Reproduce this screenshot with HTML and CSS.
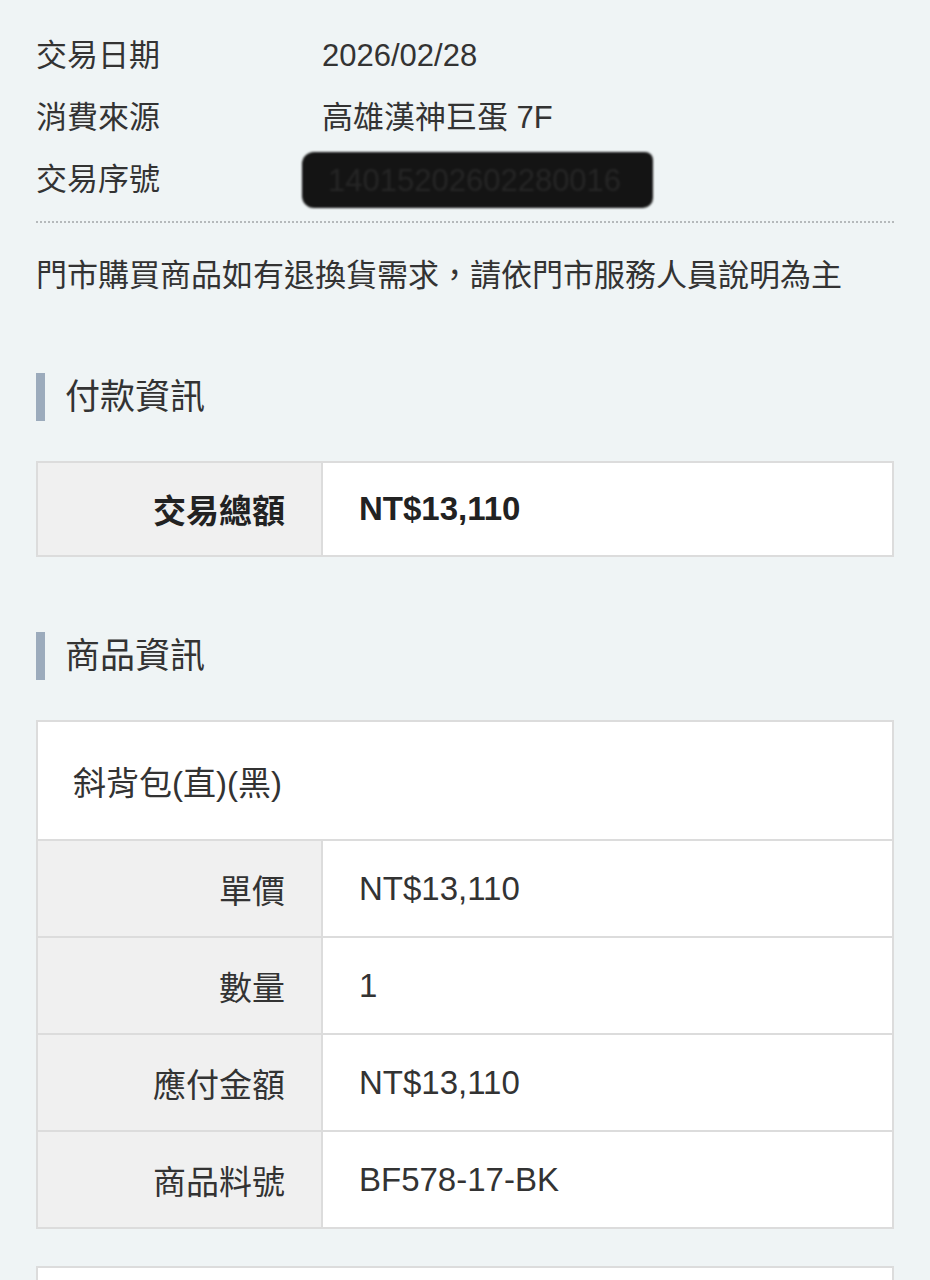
FILE: index.html
```html
<!DOCTYPE html>
<html lang="zh-Hant">
<head>
  <meta charset="UTF-8" />
  <title>交易明細</title>
  <link rel="stylesheet" href="styles.css">
</head>
<body>
  <div class="info">
    <div class="info-row">
      <span class="info-label">交易日期</span>
      <span class="info-value">2026/02/28</span>
    </div>
    <div class="info-row">
      <span class="info-label">消費來源</span>
      <span class="info-value">高雄漢神巨蛋 7F</span>
    </div>
    <div class="info-row">
      <span class="info-label">交易序號</span>
      <span class="info-value"><span class="redacted">14015202602280016</span></span>
    </div>
  </div>

  <p class="notice">門市購買商品如有退換貨需求，請依門市服務人員說明為主</p>

  <h2 class="section-title">付款資訊</h2>
  <div class="detail-table">
    <div class="detail-row">
      <div class="cell label strong">交易總額</div>
      <div class="cell value strong">NT$13,110</div>
    </div>
  </div>

  <h2 class="section-title">商品資訊</h2>
  <div class="detail-table">
    <div class="product-name">斜背包(直)(黑)</div>
    <div class="detail-row">
      <div class="cell label">單價</div>
      <div class="cell value">NT$13,110</div>
    </div>
    <div class="detail-row">
      <div class="cell label">數量</div>
      <div class="cell value">1</div>
    </div>
    <div class="detail-row">
      <div class="cell label">應付金額</div>
      <div class="cell value">NT$13,110</div>
    </div>
    <div class="detail-row">
      <div class="cell label">商品料號</div>
      <div class="cell value">BF578-17-BK</div>
    </div>
  </div>

  <div class="detail-table next-box"></div>
</body>
</html>
```

FILE: styles.css
```css
body {
  font-family: "Liberation Sans", "Noto Sans CJK TC", sans-serif;
  background: #eff4f5;
  color: #333;
  margin: 0;
  padding: 25px 36px 0;
}

.info {
  border-bottom: 2px dotted #b5b9bb;
  padding-bottom: 10px;
}

.info-row {
  display: flex;
  height: 62px;
  line-height: 62px;
  font-size: 31px;
}

.info-label {
  width: 286px;
  flex-shrink: 0;
}

.redacted {
  display: inline-block;
  background: #141414;
  color: #262626;
  line-height: 54px;
  padding: 2px 32px 0 26px;
  margin-left: -20px;
  border-radius: 12px 8px 10px 12px;
  filter: blur(1px);
  vertical-align: middle;
  margin-top: -4px;
}

.notice {
  font-size: 31px;
  line-height: 44px;
  margin: 31px 0 0;
  white-space: nowrap;
}

.section-title {
  font-size: 35px;
  font-weight: normal;
  line-height: 48px;
  height: 48px;
  margin: 75px 0 40px;
  padding-left: 20px;
  border-left: 9px solid #9cabbc;
}

.detail-table {
  background: #fff;
  border: 2px solid #dcdcdc;
}

.detail-row {
  display: grid;
  grid-template-columns: 285px 1fr;
  height: 95px;
  border-top: 2px solid #dcdcdc;
}

.detail-row:first-child {
  border-top: none;
  height: 92px;
}

.cell {
  display: flex;
  align-items: center;
  font-size: 33px;
}

.cell.label {
  background: #f0f0f0;
  border-right: 2px solid #dcdcdc;
  justify-content: flex-end;
  padding-right: 36px;
}

.cell.value {
  padding-left: 36px;
}

.strong {
  font-weight: bold;
  color: #222;
}

.product-name {
  height: 117px;
  display: flex;
  align-items: center;
  padding-left: 35px;
  font-size: 33px;
}

.next-box {
  margin-top: 37px;
  height: 60px;
  border-bottom: none;
}
```
